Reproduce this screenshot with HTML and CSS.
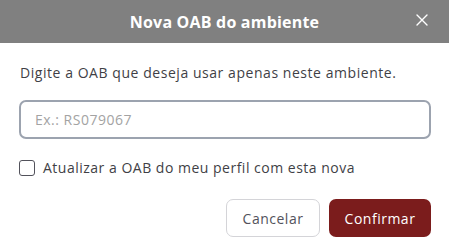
FILE: index.html
```html
<!DOCTYPE html>
<html lang="pt-BR">
<head>
    <meta charset="UTF-8">
    <meta name="viewport" content="width=device-width, initial-scale=1.0">
    <title>Nova OAB do ambiente</title>
    <link rel="stylesheet" href="styles.css">
</head>
<body>
    <div class="modal">
        <div class="modal-header">
            <h2 class="modal-title">Nova OAB do ambiente</h2>
            <button class="close-btn" aria-label="Fechar">
                <svg width="12" height="12" viewBox="0 0 12 12">
                    <path d="M1 1 L11 11 M11 1 L1 11" stroke="#fff" stroke-width="1.4" stroke-linecap="round"/>
                </svg>
            </button>
        </div>

        <div class="modal-body">
            <p class="description">Digite a OAB que deseja usar apenas neste ambiente.</p>
            <input type="text" class="oab-input" placeholder="Ex.: RS079067">

            <label class="check-row">
                <input type="checkbox" class="check">
                <span>Atualizar a OAB do meu perfil com esta nova</span>
            </label>

            <div class="actions">
                <button class="btn btn-cancel">Cancelar</button>
                <button class="btn btn-confirm">Confirmar</button>
            </div>
        </div>
    </div>
</body>
</html>
```

FILE: styles.css
```css
body {
    margin: 0;
    padding: 0;
    background-color: white;
    font-family: "Open Sans", Arial, sans-serif;
}
.modal {
    width: 449px;
    height: 250px;
    background-color: white;
}
.modal-header {
    position: relative;
    height: 43px;
    background-color: #808080;
    display: flex;
    align-items: center;
    justify-content: center;
}
.modal-title {
    margin: 0;
    color: white;
    font-size: 16px;
    font-weight: 700;
    letter-spacing: 0.2px;
}
.close-btn {
    position: absolute;
    right: 20px;
    top: 13px;
    width: 14px;
    height: 14px;
    padding: 0;
    border: none;
    background: none;
    display: flex;
    align-items: center;
    justify-content: center;
    cursor: pointer;
}
.modal-body {
    padding: 20px 19px 0 19px;
}
.description {
    margin: 0 0 0 1px;
    font-size: 14px;
    line-height: 20px;
    letter-spacing: 0.55px;
    color: #3f3f46;
}
.oab-input {
    display: block;
    width: 412px;
    height: 39px;
    margin-top: 17px;
    padding: 0 14px;
    border: 2px solid #9ca3af;
    border-radius: 7px;
    box-sizing: border-box;
    font-family: inherit;
    font-size: 14px;
    letter-spacing: 0.5px;
    color: #333;
    outline: none;
}
.oab-input::placeholder {
    color: #a3a3a3;
}
.check-row {
    display: flex;
    align-items: center;
    gap: 8px;
    margin-top: 19px;
    font-size: 14px;
    letter-spacing: 0.5px;
    color: #3f3f46;
    cursor: pointer;
}
.check {
    appearance: none;
    width: 16px;
    height: 16px;
    margin: 0;
    border: 1.5px solid #52525b;
    border-radius: 3px;
    box-sizing: border-box;
}
.actions {
    display: flex;
    justify-content: flex-end;
    gap: 9px;
    margin-top: 22px;
    width: 412px;
}
.btn {
    height: 38px;
    padding: 0;
    border-radius: 7px;
    font-family: inherit;
    font-size: 14px;
    letter-spacing: 0.5px;
    cursor: pointer;
    box-sizing: border-box;
}
.btn-cancel {
    width: 94px;
    background-color: white;
    border: 1px solid #d4d4d8;
    color: #52525b;
}
.btn-confirm {
    width: 102px;
    background-color: #7b1c1c;
    border: none;
    color: white;
}
```
